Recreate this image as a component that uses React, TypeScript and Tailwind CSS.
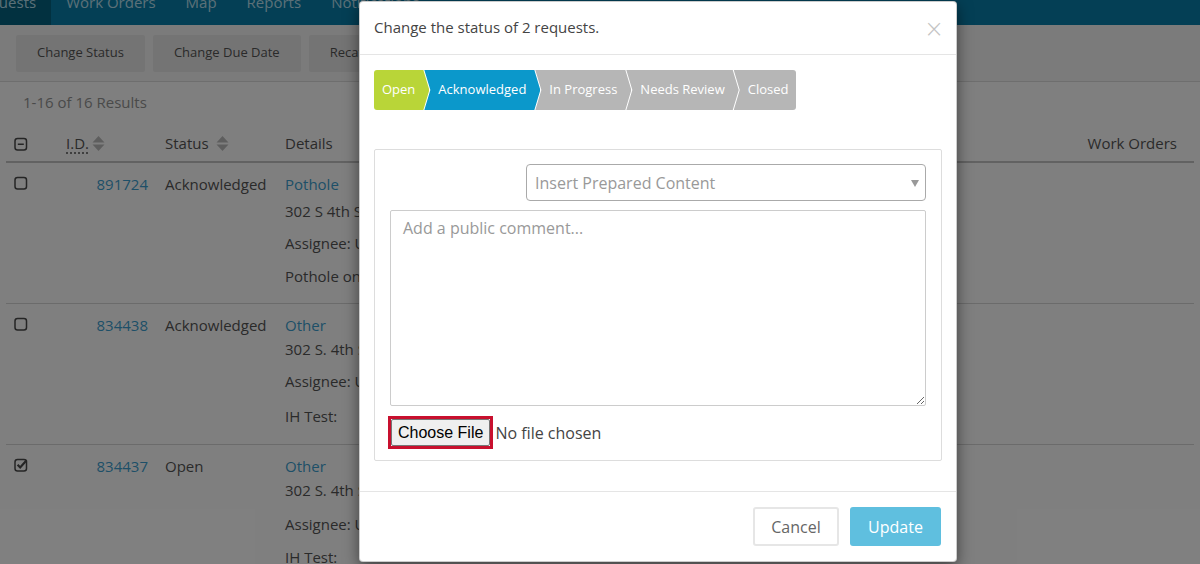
import React from "react";

type Step = { label: string; bg: string; shape: string; pad: string };

const steps: Step[] = [
  {
    label: "Open",
    bg: "bg-[#b9d538]",
    shape: "rounded-l-[3px] [clip-path:polygon(0_0,calc(100%_-_6px)_0,100%_50%,calc(100%_-_6px)_100%,0_100%)]",
    pad: "pl-[8px] pr-[14px]",
  },
  {
    label: "Acknowledged",
    bg: "bg-[#0b98cb]",
    shape: "-ml-[5px] [clip-path:polygon(0_0,calc(100%_-_6px)_0,100%_50%,calc(100%_-_6px)_100%,0_100%,6px_50%)]",
    pad: "pl-[14px] pr-[14px]",
  },
  {
    label: "In Progress",
    bg: "bg-[#b6b6b6]",
    shape: "-ml-[5px] [clip-path:polygon(0_0,calc(100%_-_6px)_0,100%_50%,calc(100%_-_6px)_100%,0_100%,6px_50%)]",
    pad: "pl-[14px] pr-[14px]",
  },
  {
    label: "Needs Review",
    bg: "bg-[#b6b6b6]",
    shape: "-ml-[5px] [clip-path:polygon(0_0,calc(100%_-_6px)_0,100%_50%,calc(100%_-_6px)_100%,0_100%,6px_50%)]",
    pad: "pl-[14px] pr-[14px]",
  },
  {
    label: "Closed",
    bg: "bg-[#b6b6b6]",
    shape: "-ml-[5px] rounded-r-[3px] [clip-path:polygon(0_0,100%_0,100%_100%,0_100%,6px_50%)]",
    pad: "pl-[14px] pr-[8px]",
  },
];

type Row = {
  id: string;
  status: string;
  checked: boolean;
  type: string;
  address: string;
  assignee: string;
  note: string;
  gap: string;
  assigneeGap: string;
  noteGap: string;
};

const rows: Row[] = [
  {
    id: "891724",
    status: "Acknowledged",
    checked: false,
    type: "Pothole",
    address: "302 S 4th St",
    assignee: "Assignee: Unassigned",
    note: "Pothole on 4th",
    gap: "mt-[3px]",
    assigneeGap: "mt-[8px]",
    noteGap: "mt-[9px]",
  },
  {
    id: "834438",
    status: "Acknowledged",
    checked: false,
    type: "Other",
    address: "302 S. 4th St",
    assignee: "Assignee: Unassigned",
    note: "IH Test:",
    gap: "mt-0",
    assigneeGap: "mt-[8px]",
    noteGap: "mt-[11px]",
  },
  {
    id: "834437",
    status: "Open",
    checked: true,
    type: "Other",
    address: "302 S. 4th St",
    assignee: "Assignee: Unassigned",
    note: "IH Test:",
    gap: "mt-0",
    assigneeGap: "mt-[10px]",
    noteGap: "mt-[9px]",
  },
];

function Box({ kind }: { kind: "empty" | "minus" | "check" }) {
  return (
    <svg width="14" height="14" viewBox="0 0 14 14" fill="none" stroke="#4a4a4a">
      <rect x="1" y="1.5" width="11.5" height="11.5" rx="2.5" strokeWidth="1.5" />
      {kind === "minus" && <path d="M3.8 7.25h6" strokeWidth="1.5" />}
      {kind === "check" && <path d="M3.6 6.8l2.6 2.7 6.4-7.2" strokeWidth="2.2" />}
    </svg>
  );
}

function Sort() {
  return (
    <svg width="13" height="17" viewBox="0 0 13 17" fill="#bdbdbd">
      <path d="M0.5 7.5L6.5 1l6 6.5z" />
      <path d="M0.5 9.5L6.5 16l6-6.5z" />
    </svg>
  );
}

function Page() {
  return (
    <div className="w-full text-[#555] text-[15px]">
      {/* nav */}
      <nav className="h-[46px] -mt-[21px] bg-[#087eaa] flex text-[15px] text-[#b8e0f0]">
        <div className="-ml-[43px] pl-[15px] pr-[15px] flex items-center bg-[#046280]">Requests</div>
        <div className="px-[15px] flex items-center">Work Orders</div>
        <div className="px-[15px] flex items-center">Map</div>
        <div className="px-[15px] flex items-center">Reports</div>
        <div className="px-[15px] flex items-center">Notifications</div>
      </nav>

      {/* toolbar */}
      <div className="h-[57px] bg-[#f6f6f6] border-b border-[#dcdcdc] flex items-center gap-[8px] px-[16px]">
        <button className="h-[37px] px-[21px] rounded-[2px] bg-[#e9e9e9] text-[13px] text-[#555]">Change Status</button>
        <button className="h-[37px] px-[21px] rounded-[2px] bg-[#e9e9e9] text-[13px] text-[#555]">Change Due Date</button>
        <button className="h-[37px] px-[21px] rounded-[2px] bg-[#e9e9e9] text-[13px] text-[#555]">Recategorize</button>
      </div>

      <div className="pl-[23px] pt-[8px] h-[40px] leading-[24px] text-[#949494]">1-16 of 16 Results</div>

      {/* table */}
      <div className="mx-[6px]">
        <div className="flex items-center h-[41px] pt-[4px] border-b-2 border-[#c4c4c4]">
          <div className="w-[54px] pl-[8px] flex">
            <Box kind="minus" />
          </div>
          <div className="w-[101px] pl-[6px] flex items-center gap-[3px]">
            <span className="underline decoration-dotted underline-offset-[3px]">I.D.</span>
            <Sort />
          </div>
          <div className="w-[120px] pl-[4px] flex items-center gap-[7px]">
            <span>Status</span>
            <Sort />
          </div>
          <div className="flex-1 pl-[4px]">Details</div>
          <div className="pr-[17px]">Work Orders</div>
        </div>

        {rows.map((r) => (
          <div key={r.id} className="flex h-[141px] pt-[9px] border-b border-[#d6d6d6] leading-[24px]">
            <div className="w-[54px] pl-[8px] pt-[4px]">
              <Box kind={r.checked ? "check" : "empty"} />
            </div>
            <div className="w-[95px] text-right pr-[7px] text-[#3d9fd0]">{r.id}</div>
            <div className="w-[126px] pl-[10px]">{r.status}</div>
            <div className="flex-1 pl-[4px]">
              <div className="text-[#3d9fd0]">{r.type}</div>
              <div className={r.gap}>{r.address}</div>
              <div className={r.assigneeGap}>{r.assignee}</div>
              <div className={r.noteGap}>{r.note}</div>
            </div>
          </div>
        ))}
      </div>
    </div>
  );
}

function Modal() {
  return (
    <div className="absolute left-[359px] top-[1px] w-[598px] bg-white border border-black/20 rounded-[4px] shadow-[0_5px_15px_rgba(0,0,0,0.5)]">
      <div className="flex items-center justify-between px-[14px] pt-[14px] pb-[15px] border-b border-[#e5e5e5]">
        <h4 className="text-[15px] leading-[23px] text-[#444]">Change the status of 2 requests.</h4>
        <button className="text-[24px] leading-[20px] font-light text-[#c4c4c4] font-['DejaVu_Sans',sans-serif] -mr-[2px] mt-[2px]">×</button>
      </div>

      <div className="px-[14px] pt-[15px] pb-[30px]">
        <div className="flex h-[40px] text-[13px] text-white">
          {steps.map((s) => (
            <div key={s.label} className={`flex items-center ${s.bg} ${s.shape} ${s.pad}`}>
              {s.label}
            </div>
          ))}
        </div>

        <div className="mt-[39px] border border-[#dddddd] rounded-[2px] pt-[14px] pb-[11px] px-[15px]">
          <div className="flex justify-end">
            <div className="w-[400px] h-[37px] border border-[#aaa] rounded-[4px] flex items-center justify-between pl-[8px] pr-[6px] text-[#999]">
              <span>Insert Prepared Content</span>
              <svg width="8" height="8" viewBox="0 0 8 8" fill="#999">
                <path d="M0 1h8L4 8z" />
              </svg>
            </div>
          </div>
          <textarea
            className="mt-[9px] block w-full h-[196px] border border-[#cccccc] rounded-[2px] px-[12px] py-[6px] leading-[22px] placeholder:text-[#999] outline-none"
            placeholder="Add a public comment..."
          />
          <div className="mt-[10px] flex items-center -ml-[2px]">
            <span className="inline-flex border-[3px] border-[#c8102e]">
              <span className="h-[27px] px-[6px] flex items-center bg-[#efefef] border border-[#767676] rounded-[2px] text-[16px] text-black font-['Liberation_Sans',sans-serif]">
                Choose File
              </span>
            </span>
            <span className="ml-[2px] text-[#444]">No file chosen</span>
          </div>
        </div>
      </div>

      <div className="border-t border-[#e5e5e5] px-[15px] pt-[15px] pb-[15px] flex justify-end gap-[11px]">
        <button className="h-[39px] w-[86px] border-2 border-[#e6e6e6] rounded-[3px] text-[#666]">Cancel</button>
        <button className="h-[39px] w-[91px] bg-[#5fbfdf] rounded-[3px] text-white">Update</button>
      </div>
    </div>
  );
}

export default function App() {
  return (
    <div className="relative w-full h-[564px] overflow-hidden bg-white font-['Open_Sans',sans-serif]">
      <Page />
      <div className="absolute inset-0 bg-black/50" />
      <Modal />
    </div>
  );
}
